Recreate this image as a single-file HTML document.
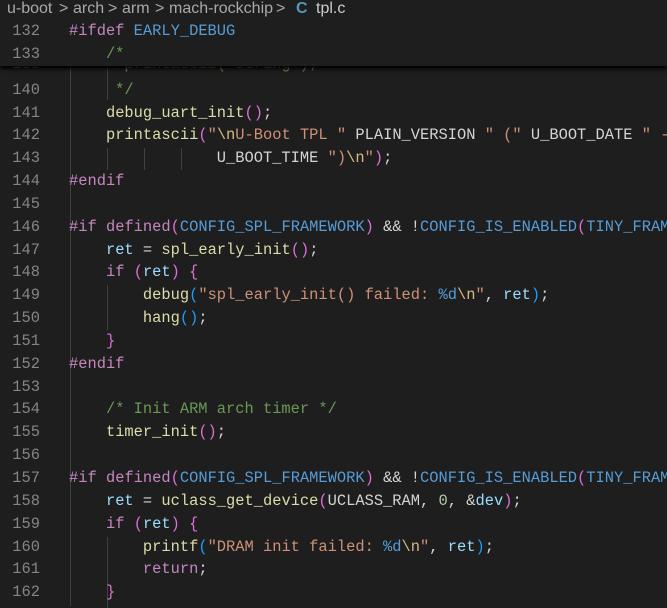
<!DOCTYPE html>
<html><head><meta charset="utf-8"><style>
html,body{margin:0;padding:0;background:#1e1e1e;width:667px;height:608px;overflow:hidden}
#w{position:absolute;left:0;top:0;width:667px;height:608px;overflow:hidden}
.bc{position:absolute;left:0;top:0;width:667px;height:20px;font:16px "Liberation Sans",sans-serif;color:#a9a9a9;white-space:pre;line-height:17px;z-index:5;background:#1e1e1e}
.bc span{position:absolute;top:0}
.ln{position:absolute;left:0;width:40px;text-align:right;color:#858585;font:15.4px "Liberation Mono",monospace;height:23px;line-height:23px}
.cd{position:absolute;left:69px;font:15.4px "Liberation Mono",monospace;color:#d4d4d4;white-space:pre;height:23px;line-height:23px}
.g{position:absolute;width:1px;background:#404040}
.p{color:#c586c0}.m{color:#569cd6}.f{color:#dcdcaa}.s{color:#ce9178}.c{color:#6a9955}.v{color:#9cdcfe}.n{color:#b5cea8}
.y{color:#ffd700}.o{color:#da70d6}.b{color:#179fff}.e{color:#d7ba7d}
.sticky{position:absolute;left:0;top:20px;width:667px;height:46px;background:#1e1e1e;z-index:4;box-shadow:0 3px 4px #000}
</style></head><body><div id="w">
<div class="bc"><span style="left:7px">u-boot</span><span style="left:59px">&gt;</span><span style="left:73px">arch</span><span style="left:108px">&gt;</span><span style="left:122px">arm</span><span style="left:155px">&gt;</span><span style="left:169px">mach-rockchip</span><span style="left:276px">&gt;</span><span style="left:296px;color:#519aba;font-weight:bold">C</span><span style="left:316px;color:#cccccc">tpl.c</span></div>
<div class="sticky">
<div class="ln" style="top:0">132</div><div class="cd" style="top:0"><span class="p">#ifdef</span> <span class="m">EARLY_DEBUG</span></div>
<div class="ln" style="top:23px">133</div><div class="cd" style="top:23px"><span class="c">    /*</span></div>
</div>
<div class="g" style="left:70px;top:66px;height:540px"></div>
<div class="g" style="left:107px;top:66px;height:34px"></div>
<div class="g" style="left:107px;top:148px;height:22px"></div>
<div class="g" style="left:144px;top:148px;height:22px"></div>
<div class="g" style="left:181px;top:148px;height:22px"></div>
<div class="g" style="left:107px;top:285px;height:45px"></div>
<div class="g" style="left:107px;top:582px;height:26px"></div>
<div class="g" style="left:107px;top:537px;height:45px"></div>
<div class="ln" style="top:53px">139</div><div class="cd" style="top:53px"><span class="c">      printascii("string");</span></div>
<div class="ln" style="top:79px">140</div><div class="cd" style="top:79px"><span class="c">     */</span></div>
<div class="ln" style="top:102px">141</div><div class="cd" style="top:102px">    <span class="f">debug_uart_init</span><span class="o">()</span>;</div>
<div class="ln" style="top:124px">142</div><div class="cd" style="top:124px">    <span class="f">printascii</span><span class="o">(</span><span class="s">"<span class="e">\n</span>U-Boot TPL "</span> PLAIN_VERSION <span class="s">" ("</span> U_BOOT_DATE <span class="s">" -</span></div>
<div class="ln" style="top:147px">143</div><div class="cd" style="top:147px">                <span>U_BOOT_TIME</span> <span class="s">")<span class="e">\n</span>"</span><span class="o">)</span>;</div>
<div class="ln" style="top:170px">144</div><div class="cd" style="top:170px"><span class="p">#endif</span></div>
<div class="ln" style="top:193px">145</div>
<div class="ln" style="top:216px">146</div><div class="cd" style="top:216px"><span class="p">#if</span> <span class="p">defined</span><span class="o">(</span><span class="m">CONFIG_SPL_FRAMEWORK</span><span class="o">)</span> &amp;&amp; !<span class="m">CONFIG_IS_ENABLED</span><span class="o">(</span><span class="m">TINY_FRAMEWORK</span></div>
<div class="ln" style="top:239px">147</div><div class="cd" style="top:239px">    <span class="v">ret</span> = <span class="f">spl_early_init</span><span class="o">()</span>;</div>
<div class="ln" style="top:261px">148</div><div class="cd" style="top:261px">    <span class="p">if</span> <span class="o">(</span><span class="v">ret</span><span class="o">)</span> <span class="o">{</span></div>
<div class="ln" style="top:284px">149</div><div class="cd" style="top:284px">        <span class="f">debug</span><span class="b">(</span><span class="s">"spl_early_init() failed: <span class="m">%d</span><span class="e">\n</span>"</span>, <span class="v">ret</span><span class="b">)</span>;</div>
<div class="ln" style="top:307px">150</div><div class="cd" style="top:307px">        <span class="f">hang</span><span class="b">()</span>;</div>
<div class="ln" style="top:330px">151</div><div class="cd" style="top:330px">    <span class="o">}</span></div>
<div class="ln" style="top:353px">152</div><div class="cd" style="top:353px"><span class="p">#endif</span></div>
<div class="ln" style="top:376px">153</div>
<div class="ln" style="top:398px">154</div><div class="cd" style="top:398px">    <span class="c">/* Init ARM arch timer */</span></div>
<div class="ln" style="top:421px">155</div><div class="cd" style="top:421px">    <span class="f">timer_init</span><span class="o">()</span>;</div>
<div class="ln" style="top:444px">156</div>
<div class="ln" style="top:467px">157</div><div class="cd" style="top:467px"><span class="p">#if</span> <span class="p">defined</span><span class="o">(</span><span class="m">CONFIG_SPL_FRAMEWORK</span><span class="o">)</span> &amp;&amp; !<span class="m">CONFIG_IS_ENABLED</span><span class="o">(</span><span class="m">TINY_FRAMEWORK</span></div>
<div class="ln" style="top:490px">158</div><div class="cd" style="top:490px">    <span class="v">ret</span> = <span class="f">uclass_get_device</span><span class="o">(</span>UCLASS_RAM, <span class="n">0</span>, &amp;<span class="v">dev</span><span class="o">)</span>;</div>
<div class="ln" style="top:513px">159</div><div class="cd" style="top:513px">    <span class="p">if</span> <span class="o">(</span><span class="v">ret</span><span class="o">)</span> <span class="o">{</span></div>
<div class="ln" style="top:536px">160</div><div class="cd" style="top:536px">        <span class="f">printf</span><span class="b">(</span><span class="s">"DRAM init failed: <span class="m">%d</span><span class="e">\n</span>"</span>, <span class="v">ret</span><span class="b">)</span>;</div>
<div class="ln" style="top:558px">161</div><div class="cd" style="top:558px">        <span class="p">return</span>;</div>
<div class="ln" style="top:581px">162</div><div class="cd" style="top:581px">    <span class="o">}</span></div>
</div></body></html>
